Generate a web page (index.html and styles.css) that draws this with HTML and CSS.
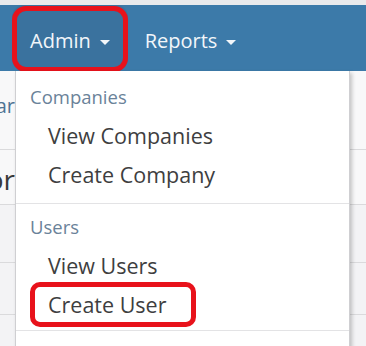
FILE: index.html
```html
<!DOCTYPE html>
<html lang="en">
<head>
<meta charset="utf-8">
<title>Admin menu</title>
<link rel="stylesheet" href="styles.css">
</head>
<body>
  <div class="topstrip"></div>
  <nav class="navbar">
    <a class="nav-link active marked">Admin<span class="caret"></span></a>
    <a class="nav-link">Reports<span class="caret"></span></a>
  </nav>
  <div class="page">
    <div class="content">
      <div class="row crumb-row"><div class="peek"><span class="crumb">Home / Calendar</span></div></div>
      <div class="row title-row"><div class="peek"><span class="title">Administrator</span></div></div>
      <div class="row r3"></div>
      <div class="row r4"></div>
      <div class="row r5"></div>
    </div>
    <ul class="dropdown">
      <li class="dd-header">Companies</li>
      <li class="dd-item">View Companies</li>
      <li class="dd-item">Create Company</li>
      <li class="dd-divider"></li>
      <li class="dd-header">Users</li>
      <li class="dd-item">View Users</li>
      <li class="dd-item marked-item">Create User</li>
      <li class="dd-divider last"></li>
    </ul>
  </div>
</body>
</html>
```

FILE: styles.css
```css
*, *::before, *::after { box-sizing: border-box; }
html, body { margin: 0; padding: 0; }
body {
  width: 366px;
  height: 346px;
  overflow: hidden;
  background: #f3f3f5;
  font-family: "Open Sans", "Noto Sans", sans-serif;
}
.topstrip {
  height: 5px;
  background: #e9eaec;
}
.navbar {
  height: 66px;
  background: #3c7aa9;
  display: flex;
  padding-left: 12px;
}
.nav-link {
  position: relative;
  display: block;
  color: #f2f6fa;
  font-size: 20px;
  line-height: 61px;
  padding: 5px 17px 0 17px;
  text-decoration: none;
}
.nav-link.active {
  background: #3a729e;
  padding: 5px 18px 0 18px;
  border-radius: 12px;
}
.caret {
  display: inline-block;
  width: 0;
  height: 0;
  margin-left: 9px;
  vertical-align: middle;
  border-top: 5px solid #f2f6fa;
  border-left: 5px solid transparent;
  border-right: 5px solid transparent;
}
.marked::after {
  content: "";
  position: absolute;
  left: 0;
  right: 0;
  top: 1px;
  bottom: -1px;
  border: 5px solid #e8121b;
  border-radius: 14px;
}
.page {
  position: relative;
}
.content {
  display: flex;
  flex-direction: column;
}
.row {
  border-bottom: 1px solid #dadadc;
  display: flex;
  align-items: center;
}
.crumb-row { height: 79px; background: #f8f8f9; }
.title-row { height: 55px; background: #f8f8f9; }
.r3 { height: 58px; }
.r4 { height: 52px; }
.r5 { height: 40px; border-bottom: none; }
.peek {
  width: 15px;
  overflow: hidden;
  display: flex;
  justify-content: flex-end;
  white-space: nowrap;
  flex: none;
}
.crumb {
  font-size: 20px;
  color: #4f7394;
  margin-bottom: 10px;
}
.title {
  font-size: 28px;
  color: #3a3a3a;
  margin-top: 4px;
}
.dropdown {
  position: absolute;
  left: 15px;
  top: 0;
  width: 335px;
  height: 300px;
  margin: 0;
  padding: 6px 0 0 0;
  list-style: none;
  background: #ffffff;
  border: 1px solid #cfcfd2;
  border-top: none;
  box-shadow: 2px 2px 4px rgba(0, 0, 0, 0.22);
}
.dd-header {
  font-size: 18.5px;
  line-height: 24px;
  color: #6a8299;
  padding: 8px 14px 7px 14px;
}
.dd-item {
  position: relative;
  font-size: 21.5px;
  line-height: 31px;
  color: #3e3e40;
  padding: 4px 14px 4px 32px;
}
.dd-divider {
  height: 1px;
  background: #e3e3e5;
  margin: 9px 0 3px 0;
}
.dd-divider.last {
  margin-top: 6px;
}
.marked-item::after {
  content: "";
  position: absolute;
  left: 14px;
  top: -3px;
  width: 166px;
  height: 45px;
  border: 5px solid #e8121b;
  border-radius: 10px;
}
```
